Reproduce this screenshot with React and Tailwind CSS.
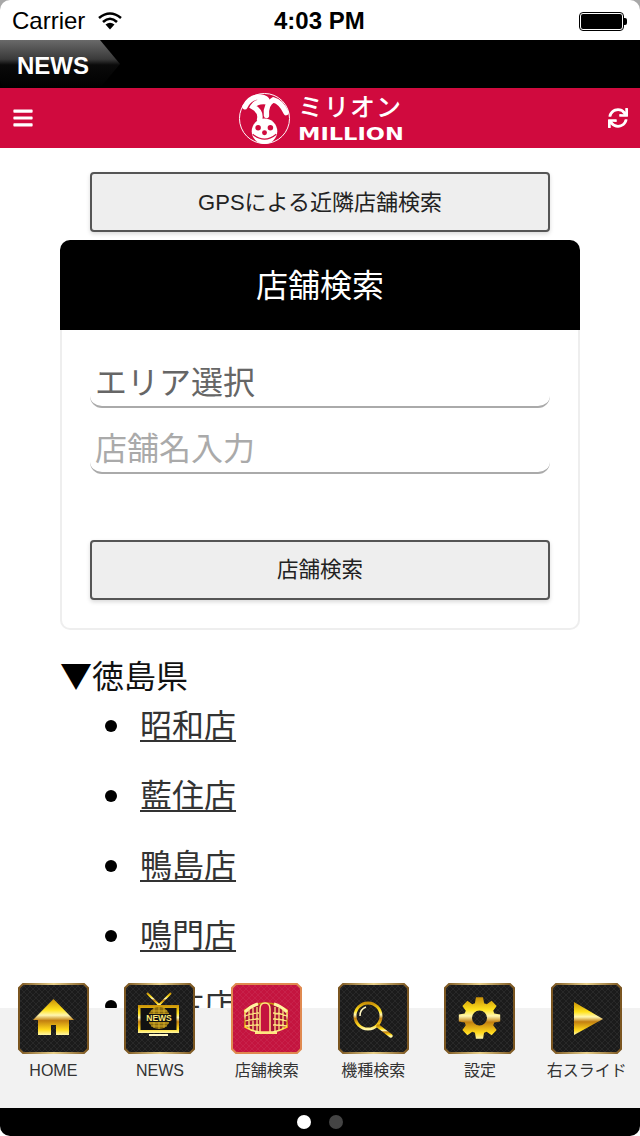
import { FaBars, FaSync } from "react-icons/fa";

const JP = "font-['Liberation_Sans','Noto_Sans_CJK_JP',sans-serif]";

const stores = ["昭和店", "藍住店", "鴨島店", "鳴門店", "佐古店"];

// 8 tooth gear outline with a round hole
function gearPath(cx, cy, outer, inner, hole) {
  let d = "";
  for (let i = 0; i < 8; i++) {
    const a = (i * Math.PI) / 4 - Math.PI / 2;
    const pts = [
      [inner, a - 0.3],
      [outer, a - 0.17],
      [outer, a + 0.17],
      [inner, a + 0.3],
    ];
    pts.forEach(([r, t], j) => {
      d += `${i === 0 && j === 0 ? "M" : "L"}${(cx + r * Math.cos(t)).toFixed(2)} ${(cy + r * Math.sin(t)).toFixed(2)}`;
    });
  }
  d += `Z M${cx} ${cy - hole}A${hole} ${hole} 0 1 0 ${cx} ${cy + hole}A${hole} ${hole} 0 1 0 ${cx} ${cy - hole}Z`;
  return d;
}

function GoldDefs({ id }) {
  return (
    <defs>
      <linearGradient id={id} x1="0" y1="0" x2="0" y2="1">
        <stop offset="0" stopColor="#c88f08" />
        <stop offset="0.3" stopColor="#ffe21c" />
        <stop offset="0.45" stopColor="#fff6b0" />
        <stop offset="0.6" stopColor="#c27f10" />
        <stop offset="0.85" stopColor="#ffd81a" />
        <stop offset="1" stopColor="#fff7a8" />
      </linearGradient>
      <linearGradient id={id + "-frame"} x1="0" y1="0" x2="1" y2="0">
        <stop offset="0" stopColor="#7a5520" />
        <stop offset="0.5" stopColor="#e8cf8a" />
        <stop offset="1" stopColor="#7a5520" />
      </linearGradient>
      <pattern id={id + "-mesh"} width="6" height="6" patternUnits="userSpaceOnUse">
        <path d="M0 3L3 0L6 3L3 6Z" fill="none" stroke="#ffffff" strokeOpacity="0.07" strokeWidth="0.8" />
      </pattern>
    </defs>
  );
}

// chamfered gold frame shared by all tiles
function Tile({ id, red, children }) {
  const shape = "M5 1H66L70 5V66L66 70H5L1 66V5Z";
  return (
    <svg width="71" height="71" viewBox="0 0 71 71" className="block">
      <GoldDefs id={id} />
      <path d={shape} fill={red ? "#c4143f" : "#1b1b1b"} />
      <path d={shape} fill={`url(#${id}-mesh)`} />
      <path d={shape} fill="none" stroke={red ? "#e08a50" : `url(#${id}-frame)`} strokeWidth="2" />
      {children}
    </svg>
  );
}

function HomeIcon() {
  return (
    <Tile id="home">
      <path d="M35.500 16L56 37H51V52H38V42H33V52H20V37H15Z" fill="url(#home)" />
    </Tile>
  );
}

function NewsIcon() {
  return (
    <Tile id="tv">
      <path d="M23 10L35 22L47 10" fill="none" stroke="url(#tv)" strokeWidth="2" />
      <rect x="14" y="22" width="41" height="28" fill="url(#tv)" />
      <rect x="16.500" y="25" width="36" height="22" fill="#111" />
      <circle cx="35" cy="35" r="11" fill="#8a6a10" />
      <path d="M27 28H43M25 31H45M25 40H45M27 43H43M35 24V46M30 25V45M40 25V45" fill="none" stroke="#e0b92a" strokeWidth="0.800" />
      <rect x="22" y="31" width="26" height="8" fill="#111" />
      <text x="35" y="38" textAnchor="middle" fontSize="8.500" fontWeight="700" fill="#ffeb7a" fontFamily="Liberation Sans">NEWS</text>
      <rect x="25" y="51" width="19" height="2" fill="#fff6c0" />
    </Tile>
  );
}

function StoreIcon() {
  return (
    <Tile id="store" red>
      <path d="M14 27Q35 13 56 27V44Q48 48 42 49H28Q21 48 14 44Z" fill="#a81236" stroke="url(#store)" strokeWidth="1.500" />
      <path d="M14 29Q20 23 27 21M56 29Q50 23 43 21" fill="none" stroke="#fff2a0" strokeWidth="3" />
      <path d="M18 26V46M22 25V47M26 24V48M44 24V48M48 25V47M52 26V46M14 33Q21 30 28 30M14 38Q21 36 28 36M14 43Q21 42 28 42M56 33Q49 30 42 30M56 38Q49 36 42 36M56 43Q49 42 42 42" fill="none" stroke="#ffe680" strokeWidth="1.300" />
      <path d="M29 49V26Q29 20 34 20Q39 20 39 26V49Z" fill="#c4143f" stroke="#ffe680" strokeWidth="1.500" />
      <path d="M24 49H46V51H24Z" fill="#ffe680" />
    </Tile>
  );
}

function LensIcon() {
  return (
    <Tile id="lens">
      <circle cx="30" cy="33" r="13" fill="none" stroke="url(#lens)" strokeWidth="3" />
      <path d="M22 33Q22 26 28 24" fill="none" stroke="#fff7c0" strokeWidth="1.500" />
      <path d="M40 43L53 53" stroke="url(#lens)" strokeWidth="3.500" strokeLinecap="round" />
    </Tile>
  );
}

function GearIcon() {
  return (
    <Tile id="gear">
      <path fillRule="evenodd" fill="url(#gear)" d={gearPath(35.5, 35, 21, 15.5, 7.5)} />
    </Tile>
  );
}

function PlayIcon() {
  return (
    <Tile id="play">
      <path d="M23 19L52 36L23 52Z" fill="url(#play)" />
    </Tile>
  );
}

const navItems = [
  { label: "HOME", icon: HomeIcon },
  { label: "NEWS", icon: NewsIcon },
  { label: "店舗検索", icon: StoreIcon },
  { label: "機種検索", icon: LensIcon },
  { label: "設定", icon: GearIcon },
  { label: "右スライド", icon: PlayIcon },
];

function Logo() {
  return (
    <div className="flex items-center gap-[7px]">
      <svg width="53" height="53" viewBox="0 0 54 54">
        <circle cx="27" cy="27" r="25.500" fill="none" stroke="#fff" strokeWidth="1" />
        <path d="M7 15Q12 5 22 5Q31 6 29 10Q18 9 15 15Q24 20 22 28" fill="none" stroke="#fff" strokeWidth="5.500" strokeLinecap="round" />
        <path d="M29 24Q28 12 36 8Q44 10 49 21" fill="none" stroke="#fff" strokeWidth="5.500" strokeLinecap="round" />
        <circle cx="27" cy="40" r="13" fill="#fff" />
        <circle cx="20.500" cy="36.500" r="2.800" fill="#d00a3e" />
        <circle cx="33" cy="36.500" r="2.800" fill="#d00a3e" />
        <circle cx="27" cy="41.500" r="2.500" fill="#d00a3e" />
        <path d="M15 43Q27 53 39 43" fill="none" stroke="#d00a3e" strokeWidth="1.200" />
      </svg>
      <div className="flex flex-col w-[104px] text-white mt-[-2px]">
        <span className="font-['Noto_Sans_CJK_JP',sans-serif] text-[25px] leading-[24px] tracking-[1px] font-medium whitespace-nowrap">ミリオン</span>
        <span className="mt-[9px] font-['DejaVu_Sans',sans-serif] text-[18px] leading-[16px] font-bold whitespace-nowrap scale-x-[1.25] origin-left">MILLION</span>
      </div>
    </div>
  );
}

function StatusBar() {
  return (
    <div className="relative h-10 flex items-center justify-between bg-white pl-3 pr-[13px] pt-[2px] text-black text-[24px] rounded-t-[10px] font-['Liberation_Sans',sans-serif]">
      <div className="flex items-center gap-[13px]">
        <span>Carrier</span>
        <svg width="24" height="18" viewBox="0 0 24 18">
          <path d="M1 6Q12 -3 23 6" fill="none" stroke="#000" strokeWidth="2.600" />
          <path d="M5 10Q12 3.500 19 10" fill="none" stroke="#000" strokeWidth="2.600" />
          <path d="M12 17.500L7.500 12.500Q12 9 16.500 12.500Z" fill="#000" />
        </svg>
      </div>
      <span className="absolute left-[274px] font-bold">4:03 PM</span>
      <div className="flex items-center">
        <div className="w-[45px] h-[19px] rounded-[4px] border border-black bg-white p-[1px]">
          <div className="w-full h-full rounded-[2px] bg-black" />
        </div>
        <div className="w-[3px] h-[7px] bg-black rounded-r-[2px]" />
      </div>
    </div>
  );
}

export default function App() {
  return (
    <div className={`relative w-[640px] h-[1136px] overflow-hidden bg-white ${JP}`}>
      <div className="bg-[#a8a8a8]">
        <StatusBar />
      </div>

      <div className="h-12 bg-black">
        <div className="w-[120px] h-12 flex items-center pl-[17px] pt-[3px] text-white text-[24px] font-bold bg-[linear-gradient(to_bottom,#6a6a6a_0%,#3a3a3a_40%,#0a0a0a_52%,#000_100%)] [clip-path:polygon(0_0,100px_0,120px_24px,100px_48px,0_48px)] rounded-bl-[8px]">
          NEWS
        </div>
      </div>

      <div className="relative h-[60px] flex items-center justify-between px-3 bg-[#d00a3e] text-white">
        <FaBars size={22} />
        <div className="absolute left-[238px] top-[4px]">
          <Logo />
        </div>
        <FaSync size={20} />
      </div>

      <main className="flex flex-col items-center pt-6">
        <button className="w-[460px] h-[60px] rounded-[4px] border-2 border-[#555] bg-[#eeeeee] text-[22px] text-[#222] shadow-[0_2px_4px_rgba(0,0,0,0.15)]">
          GPSによる近隣店舗検索
        </button>

        <section className="w-[520px] mt-2">
          <h2 className="h-[90px] pt-[2px] flex items-center justify-center rounded-t-[10px] bg-black text-white text-[32px] font-normal">
            店舗検索
          </h2>
          <div className="h-[300px] px-[28px] pt-[30px] border-2 border-t-0 border-[#eeeeee] rounded-b-[10px]">
            <div className="h-[48px] flex items-center px-[5px] text-[32px] text-[#666] border-b-2 border-[#aaaaaa] rounded-b-[12px]">
              エリア選択
            </div>
            <input
              className="w-full h-[66px] pt-[18px] px-[5px] text-[32px] text-[#666] placeholder:text-[#aaaaaa] outline-none border-b-2 border-[#aaaaaa] rounded-b-[12px]"
              placeholder="店舗名入力"
            />
            <button className="w-full h-[60px] mt-[66px] rounded-[4px] border-2 border-[#555] bg-[#eeeeee] text-[21.5px] text-[#222] shadow-[0_2px_4px_rgba(0,0,0,0.15)]">
              店舗検索
            </button>
          </div>
        </section>

        <div className="w-[520px] mt-[24px] text-[32px] text-[#111]">
          <p className="h-10 leading-[40px] whitespace-nowrap">
            <span className="font-['Noto_Sans_CJK_JP',sans-serif] text-black">▼</span>徳島県
          </p>
          <ul className="mt-[12px] flex flex-col gap-[30px]">
            {stores.map((name) => (
              <li key={name} className="flex items-center h-10">
                <span className="w-3 h-3 ml-[45px] mr-[23px] rounded-full bg-black" />
                <a className="underline underline-offset-[3px] decoration-2 text-[#333]">{name}</a>
              </li>
            ))}
          </ul>
        </div>
      </main>

      {/* bottom slide menu sits over the list */}
      <nav className="absolute left-0 right-0 bottom-0">
        <div className="relative h-[100px] mt-[25px] bg-[#f2f2f2] grid grid-cols-6">
          {navItems.map(({ label, icon: Icon }) => (
            <div key={label} className="flex flex-col items-center mt-[-25px]">
              <Icon />
              <span className="mt-[5px] text-[16px] leading-6 text-[#333] whitespace-nowrap">{label}</span>
            </div>
          ))}
        </div>
        <div className="h-7 flex items-center justify-center gap-[18px] bg-black rounded-b-[10px]">
          <span className="w-[14px] h-[14px] rounded-full bg-white" />
          <span className="w-[14px] h-[14px] rounded-full bg-[#444]" />
        </div>
      </nav>
    </div>
  );
}
